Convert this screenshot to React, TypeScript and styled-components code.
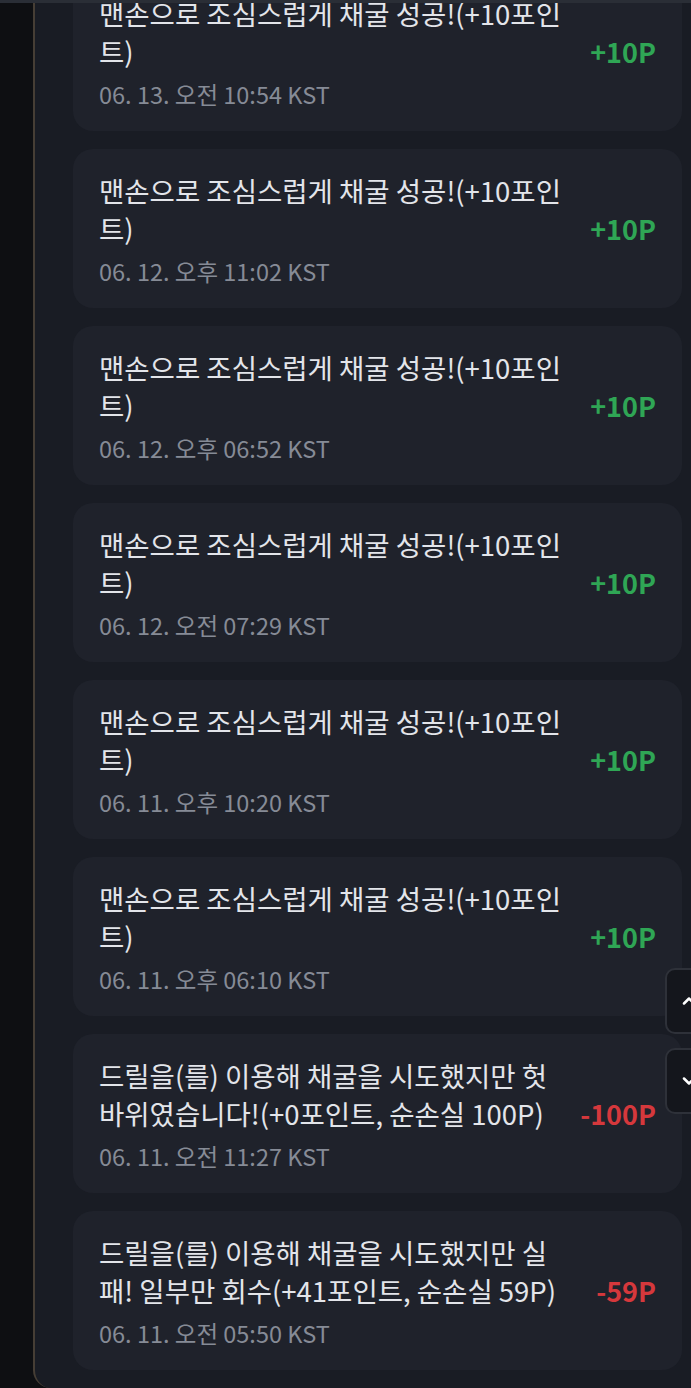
import styled, { createGlobalStyle } from 'styled-components';

const GlobalStyle = createGlobalStyle`
  html, body {
    margin: 0;
    padding: 0;
    background: #0e0f12;
  }
  body {
    font-family: "Noto Sans CJK KR", "Noto Sans", sans-serif;
    -webkit-font-smoothing: antialiased;
  }
`;

type Entry = {
  text: string;
  date: string;
  amount: number;
};

const entries: Entry[] = [
  { text: '맨손으로 조심스럽게 채굴 성공!(+10포인트)', date: '06. 13. 오전 10:54 KST', amount: 10 },
  { text: '맨손으로 조심스럽게 채굴 성공!(+10포인트)', date: '06. 12. 오후 11:02 KST', amount: 10 },
  { text: '맨손으로 조심스럽게 채굴 성공!(+10포인트)', date: '06. 12. 오후 06:52 KST', amount: 10 },
  { text: '맨손으로 조심스럽게 채굴 성공!(+10포인트)', date: '06. 12. 오전 07:29 KST', amount: 10 },
  { text: '맨손으로 조심스럽게 채굴 성공!(+10포인트)', date: '06. 11. 오후 10:20 KST', amount: 10 },
  { text: '맨손으로 조심스럽게 채굴 성공!(+10포인트)', date: '06. 11. 오후 06:10 KST', amount: 10 },
  {
    text: '드릴을(를) 이용해 채굴을 시도했지만 헛바위였습니다!(+0포인트, 순손실 100P)',
    date: '06. 11. 오전 11:27 KST',
    amount: -100,
  },
  {
    text: '드릴을(를) 이용해 채굴을 시도했지만 실패! 일부만 회수(+41포인트, 순손실 59P)',
    date: '06. 11. 오전 05:50 KST',
    amount: -59,
  },
];

const Page = styled.div`
  position: relative;
  display: flex;
  width: 691px;
  height: 1388px;
  overflow: hidden;
  background: #0e0f12;
`;

const TopEdge = styled.div`
  position: absolute;
  top: 0;
  left: 0;
  right: 0;
  height: 3px;
  background: #2a2e36;
  z-index: 2;
`;

const Gutter = styled.div`
  width: 33px;
  flex-shrink: 0;
`;

const Panel = styled.div`
  flex: 1;
  background: #191c24;
  border-left: 2px solid #463e35;
  border-bottom-left-radius: 18px;
  padding: 0 9px 0 38px;
  overflow: hidden;
`;

const List = styled.div`
  display: flex;
  flex-direction: column;
  gap: 18px;
  margin-top: -28px;
`;

const Card = styled.div`
  display: flex;
  align-items: center;
  gap: 26px;
  background: #1f222b;
  border-radius: 20px;
  padding: 21px 26px;
  min-height: 159px;
  box-sizing: border-box;
`;

const Body = styled.div`
  flex: 1;
  min-width: 0;
  display: flex;
  flex-direction: column;
  gap: 9px;
`;

const Title = styled.div`
  color: #e3e5ea;
  font-size: 27.5px;
  line-height: 38px;
  word-break: break-all;
`;

const Stamp = styled.div`
  color: #868b96;
  font-size: 23.5px;
  line-height: 30px;
`;

const Amount = styled.div<{ $neg: boolean }>`
  flex-shrink: 0;
  color: ${(p) => (p.$neg ? '#d5383c' : '#2fa655')};
  font-size: 27px;
  font-weight: 700;
  line-height: 30px;
`;

const ScrollButton = styled.button<{ $top: number }>`
  position: absolute;
  left: 665px;
  top: ${(p) => p.$top}px;
  width: 48px;
  height: 66px;
  padding: 0;
  display: flex;
  align-items: center;
  justify-content: center;
  background: #14161c;
  border: 2px solid #2e3139;
  border-radius: 10px;
  color: #ffffff;
  z-index: 3;
`;

const Chevron = ({ up }: { up?: boolean }) => (
  <svg width="20" height="20" viewBox="0 0 24 24" fill="none" stroke="currentColor" strokeWidth="3" strokeLinecap="round" strokeLinejoin="round">
    {up ? <path d="M6 15l6-6 6 6" /> : <path d="M6 9l6 6 6-6" />}
  </svg>
);

export default function App() {
  return (
    <Page>
      <GlobalStyle />
      <TopEdge />
      <Gutter />
      <Panel>
        <List>
          {entries.map((e, i) => (
            <Card key={i}>
              <Body>
                <Title>{e.text}</Title>
                <Stamp>{e.date}</Stamp>
              </Body>
              <Amount $neg={e.amount < 0}>
                {e.amount < 0 ? `${e.amount}P` : `+${e.amount}P`}
              </Amount>
            </Card>
          ))}
        </List>
      </Panel>
      <ScrollButton $top={968} aria-label="위로">
        <Chevron up />
      </ScrollButton>
      <ScrollButton $top={1048} aria-label="아래로">
        <Chevron />
      </ScrollButton>
    </Page>
  );
}
